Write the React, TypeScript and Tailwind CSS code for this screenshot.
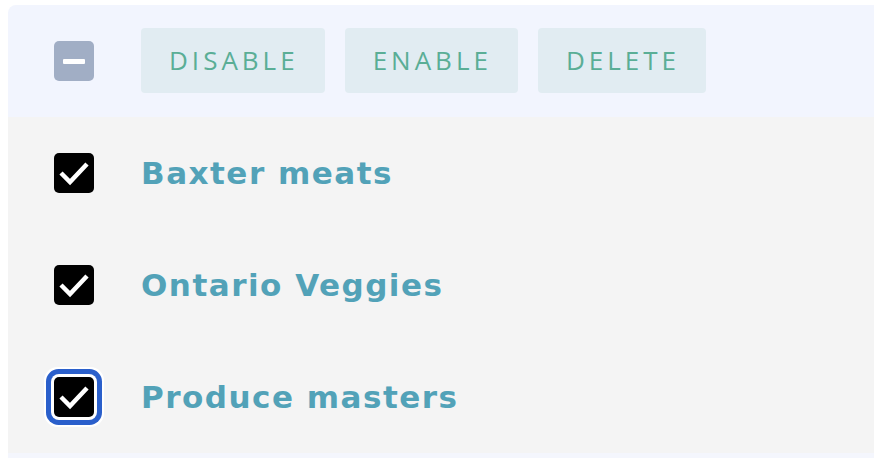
import React from "react";

const suppliers = ["Baxter meats", "Ontario Veggies", "Produce masters"];

function CheckBox({ focused }: { focused?: boolean }) {
  return (
    <div
      className={
        "w-10 h-10 rounded-[5px] bg-black flex items-center justify-center shrink-0 " +
        (focused ? "shadow-[0_0_0_3px_#ffffff,0_0_0_8px_#2a5fcb,0_0_0_10px_#ffffff]" : "")
      }
    >
      <svg width="40" height="40" viewBox="0 0 40 40">
        <polyline
          points="7,20 16,29 33,11"
          fill="none"
          stroke="white"
          strokeWidth="4.5"
        />
      </svg>
    </div>
  );
}

export default function App() {
  return (
    <div className="min-h-screen bg-white pt-[5px] pl-2 font-['Open_Sans',sans-serif]">
      <div className="rounded-tl-lg overflow-hidden">
        <div className="h-[112px] bg-[#f2f5fe] flex items-center pl-[46px]">
          <div className="w-10 h-10 rounded-[5px] bg-[#a1aec5] flex items-center justify-center shrink-0">
            <div className="w-[22px] h-[5px] bg-white rounded-[1px]"></div>
          </div>
          <div className="flex gap-5 ml-[47px] mb-[2px]">
            {["DISABLE", "ENABLE", "DELETE"].map((label) => (
              <button
                key={label}
                className="h-[65px] pl-[28px] pr-[26px] rounded-[4px] bg-[#e1ecf2] text-[#5aae96] text-[26px] tracking-[4px] font-normal"
              >
                {label}
              </button>
            ))}
          </div>
        </div>
        <div className="bg-[#f4f4f4]">
          {suppliers.map((name, i) => (
            <div key={name} className="h-[112px] flex items-center pl-[46px]">
              <CheckBox focused={i === 2} />
              <span className="ml-[47px] text-[31px] font-bold tracking-[1.5px] text-[#52a2b8] font-['DejaVu_Sans',sans-serif]">
                {name}
              </span>
            </div>
          ))}
        </div>
        <div className="h-[10px] bg-[#f4f6fd]"></div>
      </div>
    </div>
  );
}
